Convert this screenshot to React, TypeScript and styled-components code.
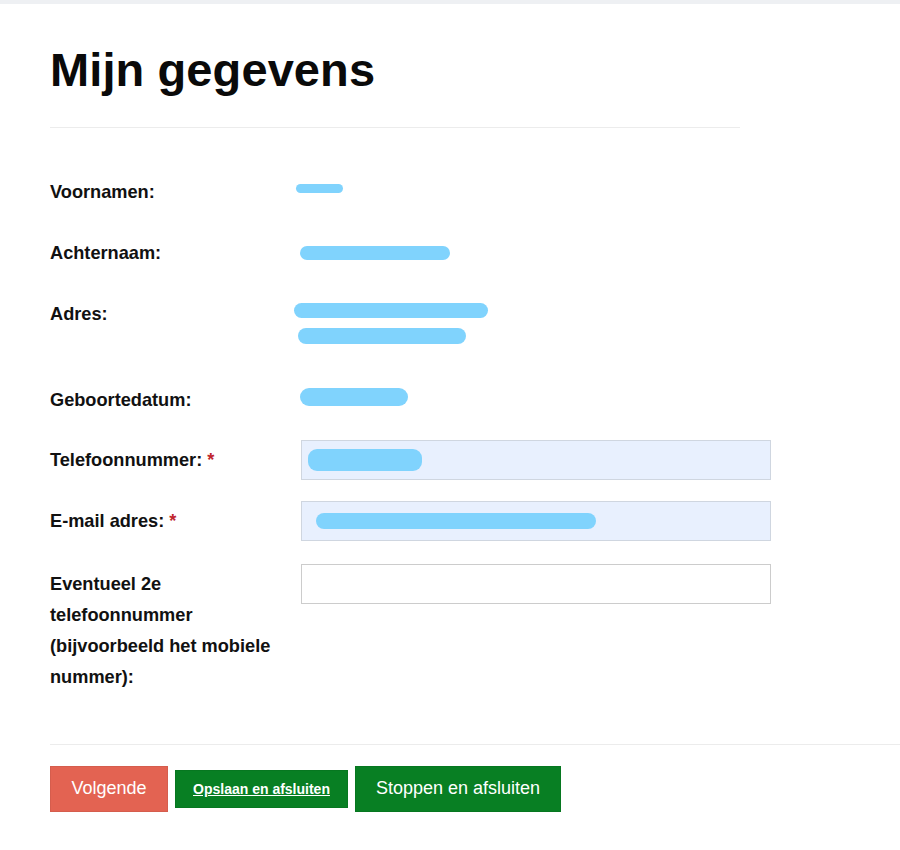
import React from "react";
import styled, { createGlobalStyle } from "styled-components";

const Global = createGlobalStyle`
  html, body { margin: 0; padding: 0; background: #fff; }
  body { font-family: "Liberation Sans", Arial, sans-serif; color: #111; }
  * { box-sizing: border-box; }
`;

const TopStrip = styled.div`
  height: 4px;
  background: #eef0f3;
`;

const Page = styled.div`
  padding: 0 0 40px 50px;
`;

const Title = styled.h1`
  margin: 0;
  padding-top: 38px;
  font-size: 47px;
  line-height: 56px;
  font-weight: bold;
  color: #0a0a0a;
  letter-spacing: 0.1px;
`;

const Divider = styled.hr<{ $wide?: boolean }>`
  border: 0;
  border-top: 1px solid #ececec;
  margin: 0;
  width: ${(p) => (p.$wide ? "850px" : "690px")};
`;

const Form = styled.div`
  padding-top: 49px;
  display: flex;
  flex-direction: column;
`;

const Row = styled.div<{ $gap: number }>`
  display: grid;
  grid-template-columns: 250px 470px;
  align-items: start;
  margin-bottom: ${(p) => p.$gap}px;
`;

const Label = styled.div<{ $pad?: number }>`
  font-size: 18.2px;
  font-weight: bold;
  line-height: 31px;
  padding-top: ${(p) => p.$pad ?? 0}px;
  color: #111;
`;

const Star = styled.span`
  color: #c0262d;
  margin-left: 5px;
`;

const Value = styled.div<{ $height?: number }>`
  display: flex;
  flex-direction: column;
  min-height: ${(p) => p.$height ?? 31}px;
`;

const Line = styled.div`
  height: 25px;
  display: flex;
  align-items: center;
`;

const Redaction = styled.span<{ $w: number; $off: number; $h?: number; $dy?: number }>`
  display: inline-block;
  width: ${(p) => p.$w}px;
  height: ${(p) => p.$h ?? 15}px;
  margin-left: ${(p) => p.$off}px;
  margin-top: ${(p) => p.$dy ?? 0}px;
  border-radius: 9px;
  background: #80d3fd;
`;

const Input = styled.div<{ $filled?: boolean }>`
  margin-left: 1px;
  width: 470px;
  height: 40px;
  border: 1px solid ${(p) => (p.$filled ? "#cfd6e0" : "#cccccc")};
  background: ${(p) => (p.$filled ? "#e8f0fe" : "#ffffff")};
  display: flex;
  align-items: center;
`;

const Buttons = styled.div`
  display: flex;
  align-items: center;
  gap: 7px;
  padding-top: 21px;
`;

const Button = styled.button<{ $bg: string; $h: number; $w: number; $small?: boolean }>`
  height: ${(p) => p.$h}px;
  width: ${(p) => p.$w}px;
  background: ${(p) => p.$bg};
  color: #fff;
  border: 1px solid rgba(0, 0, 0, 0.06);
  padding: 0;
  font-family: "Liberation Sans", Arial, sans-serif;
  font-size: ${(p) => (p.$small ? "14px" : "18px")};
  font-weight: ${(p) => (p.$small ? "bold" : "normal")};
  text-decoration: ${(p) => (p.$small ? "underline" : "none")};
  cursor: pointer;
`;

const Spacer = styled.div<{ $h: number }>`
  height: ${(p) => p.$h}px;
`;

export default function App() {
  return (
    <>
      <Global />
      <TopStrip />
      <Page>
        <Title>Mijn gegevens</Title>
        <Spacer $h={29} />
        <Divider />
        <Form>
          <Row $gap={30}>
            <Label>Voornamen:</Label>
            <Value>
              <Line>
                <Redaction $w={47} $off={-4} $h={9} $dy={-2} />
              </Line>
            </Value>
          </Row>
          <Row $gap={30}>
            <Label>Achternaam:</Label>
            <Value>
              <Line>
                <Redaction $w={150} $off={0} $h={14} $dy={4} />
              </Line>
            </Value>
          </Row>
          <Row $gap={30}>
            <Label>Adres:</Label>
            <Value $height={56}>
              <Line>
                <Redaction $w={194} $off={-6} $h={15} $dy={-2} />
              </Line>
              <Line>
                <Redaction $w={168} $off={-2} $h={16} $dy={-2} />
              </Line>
            </Value>
          </Row>
          <Row $gap={23.5}>
            <Label>Geboortedatum:</Label>
            <Value>
              <Line>
                <Redaction $w={108} $off={0} $h={18} $dy={-2} />
              </Line>
            </Value>
          </Row>
          <Row $gap={21}>
            <Label $pad={5}>
              Telefoonnummer:<Star>*</Star>
            </Label>
            <Input $filled>
              <Redaction $w={114} $off={6} $h={22} />
            </Input>
          </Row>
          <Row $gap={23}>
            <Label $pad={5}>
              E-mail adres:<Star>*</Star>
            </Label>
            <Input $filled>
              <Redaction $w={280} $off={14} $h={16} />
            </Input>
          </Row>
          <Row $gap={0}>
            <Label $pad={5}>
              Eventueel 2e
              <br />
              telefoonnummer
              <br />
              (bijvoorbeeld het mobiele
              <br />
              nummer):
            </Label>
            <Input />
          </Row>
        </Form>
        <Spacer $h={51} />
        <Divider $wide />
        <Buttons>
          <Button $bg="#e36352" $h={46} $w={118}>
            Volgende
          </Button>
          <Button $bg="#087f23" $h={38} $w={173} $small>
            Opslaan en afsluiten
          </Button>
          <Button $bg="#087f23" $h={46} $w={206}>
            Stoppen en afsluiten
          </Button>
        </Buttons>
      </Page>
    </>
  );
}
